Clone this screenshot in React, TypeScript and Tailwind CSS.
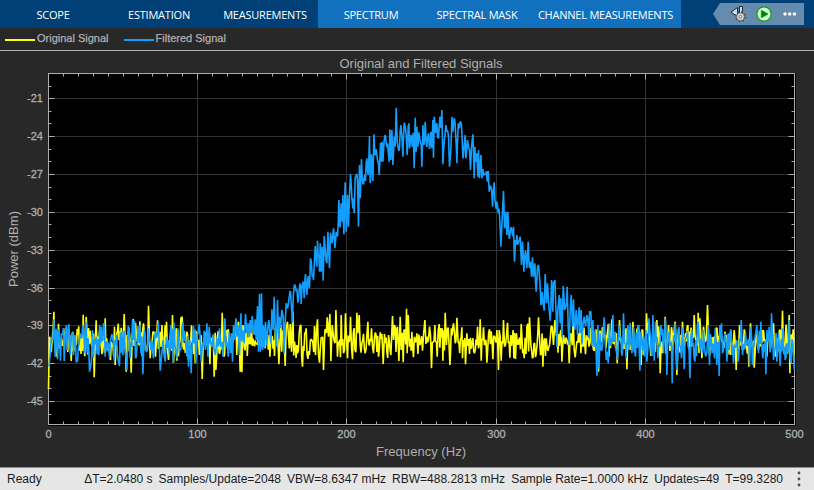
type Segment = { x: number; y: number; points: number[] };
type Point = [number, number];

// Traces are stored in pieces, in thirds of a pixel from the origin of each piece.
const ORIGINAL: Segment[] = [
  {
    x: 0,
    y: 290,
    points: [
      145, 297, 148, 140, 161, 65, 168, 200, 175, 101, 196, 114, 205, 118, 213, 213, 231, 117, 249, 74, 258, 80, 270, 122, 282, 262,
      288, 91, 298, 122, 315, 85, 331, 210, 343, 110, 345, 225, 352, 123, 363, 113, 372, 72, 378, 245, 385, 120, 393, 248, 399, 87,
      406, 98, 419, 94, 430, 100, 436, 180, 445, 47, 450, 205, 458, 126, 466, 200, 472, 91, 485, 105, 499, 95, 505, 210, 517, 75,
      520, 218, 528, 115, 530, 212, 542, 85, 546, 80, 560, 125, 565, 210, 574, 106, 585, 220,
    ],
  },
  {
    x: 200,
    y: 200,
    points: [
      0, 420, 6, 537, 12, 430, 29, 493, 42, 530, 45, 398, 47, 510, 66, 338, 71, 470, 102, 390, 107, 360, 115, 365, 120, 515, 125, 517,
      128, 375, 148, 380, 154, 378, 170, 430, 195, 445, 209, 470, 223, 468, 236, 493, 242, 375, 255, 498, 258, 385, 262, 365, 270, 372,
      274, 455, 278, 335, 290, 435, 292, 460, 302, 375, 307, 500, 318, 385, 328, 465, 343, 378, 346, 465, 352, 358, 358, 488,
      370, 510, 374, 390, 381, 352, 385, 410, 389, 342, 392, 483, 396, 375, 400, 410, 407, 330, 412, 470, 423, 345, 430, 460, 436, 340,
      442, 475, 451, 350, 457, 478, 464, 450, 470, 338, 473, 400, 477, 345, 480, 435, 495, 460, 503, 365, 514, 385, 520, 460, 525, 398,
      535, 470, 545, 402, 549, 492, 553, 402, 565, 405, 572, 465, 577, 348, 580, 420, 583, 375, 592, 380, 596, 483, 600, 350,
    ],
  },
  {
    x: 390,
    y: 220,
    points: [
      33, 390, 39, 427, 44, 330, 49, 266, 51, 400, 54, 285, 58, 380, 65, 335, 70, 412, 80, 340, 83, 402, 89, 375, 94, 348, 100, 345,
      104, 300, 110, 350, 118, 320, 124, 445, 134, 315, 141, 410, 147, 312, 156, 325, 158, 422, 165, 278, 169, 375, 179, 435, 190, 310,
      195, 370, 200, 293, 204, 370, 215, 322, 217, 415, 226, 433, 230, 340, 238, 402, 253, 400, 262, 320, 265, 385, 270, 298, 273, 422,
      280, 322, 290, 428, 298, 328, 308, 418, 320, 330, 325, 450, 327, 330, 333, 422, 340, 300, 346, 375, 352, 308, 371, 415,
      376, 417, 379, 340, 393, 312, 402, 415, 410, 320, 418, 292, 422, 375, 445, 292, 449, 375, 458, 440, 463, 355, 466, 408, 483, 318,
      486, 320, 490, 375, 494, 300, 515, 425, 520, 345, 537, 430, 543, 340, 549, 290, 555, 412, 570, 325, 572, 400, 586, 403, 599, 370,
    ],
  },
  {
    x: 590,
    y: 290,
    points: [
      2, 115, 10, 180, 25, 245, 61, 175, 65, 88, 81, 220, 88, 90, 97, 178, 110, 238, 128, 95, 145, 105, 153, 225, 169, 70, 175, 100,
      200, 90, 210, 250, 216, 190, 225, 80, 235, 105, 255, 95, 260, 255, 277, 95, 293, 105, 300, 180, 312, 75, 317, 150, 324, 68,
      329, 85, 335, 205, 340, 110, 348, 150, 352, 45, 356, 160, 378, 115, 404, 125, 420, 195, 432, 120, 438, 240, 448, 105, 462, 118,
      476, 230, 481, 100, 492, 233, 505, 180, 520, 120, 530, 200, 550, 100, 556, 200, 570, 120, 577, 62, 583, 180, 597, 75, 599, 250,
      606, 160, 612, 195,
    ],
  },
];

const FILTERED: Segment[] = [
  {
    x: 0,
    y: 290,
    points: [
      146, 230, 150, 195, 155, 150, 161, 88, 165, 200, 172, 208, 181, 212, 187, 135, 192, 213, 196, 125, 201, 180, 206, 103, 213, 140,
      220, 195, 228, 217, 232, 213, 240, 130, 250, 115, 254, 190, 257, 95, 261, 190, 268, 245, 272, 225, 277, 120, 280, 203, 288, 140,
      296, 195, 310, 100, 315, 200, 322, 155, 328, 205, 340, 160, 342, 212, 349, 135, 354, 210, 358, 228, 365, 125, 368, 195, 372, 122,
      380, 240, 384, 108, 390, 205, 397, 90, 403, 92, 406, 205, 413, 108, 416, 160, 419, 105, 422, 190, 428, 253, 433, 118, 440, 185,
      445, 115, 460, 205, 466, 125, 474, 95, 480, 242, 484, 200, 489, 150, 495, 215, 499, 140, 508, 195, 512, 105, 519, 218, 521, 97,
      527, 190, 533, 115, 542, 180, 548, 95, 555, 140, 565, 230, 569, 150, 573, 250, 580, 108, 587, 220, 591, 130, 597, 103,
    ],
  },
  {
    x: 200,
    y: 200,
    points: [
      0, 410, 3, 485, 7, 430, 12, 392, 16, 450, 20, 370, 23, 470, 27, 380, 31, 430, 35, 440, 39, 403, 42, 450, 46, 465, 50, 415, 54, 440,
      58, 385, 62, 440, 68, 470, 71, 420, 74, 355, 77, 440, 80, 425, 84, 470, 87, 395, 91, 460, 94, 400, 97, 485, 100, 375, 103, 420,
      107, 355, 110, 410, 113, 375, 116, 420, 118, 465, 122, 340, 125, 425, 128, 390, 132, 430, 136, 342, 140, 400, 144, 370, 148, 410,
      150, 360, 153, 400, 156, 348, 159, 385, 162, 405, 165, 358, 168, 420, 172, 318, 175, 455, 178, 282, 181, 455, 184, 280, 187, 450,
      190, 375, 193, 445, 196, 365, 200, 435, 203, 380, 206, 360, 209, 400, 212, 430, 215, 328, 219, 390, 222, 290, 225, 380, 228, 440,
      232, 300, 236, 415, 238, 350, 241, 385, 245, 330, 249, 350, 254, 382, 258, 310, 262, 325, 266, 298, 269, 275, 273, 310, 277, 368,
      279, 295, 281, 265, 286, 260, 290, 268, 293, 308, 297, 270, 301, 255, 303, 312, 308, 245, 312, 295, 316, 222, 320, 285, 324, 228,
      328, 265, 331, 175, 336, 230, 340, 240, 345, 138, 350, 200, 352, 122, 356, 170, 358, 215, 360, 130, 363, 215, 366, 140, 369, 242,
      372, 108, 376, 165, 380, 190, 383, 95, 388, 205, 391, 98, 396, 130, 400, 85, 404, 145, 408, 95, 412, 108, 416, 0, 419, 80,
    ],
  },
  {
    x: 340,
    y: 95,
    points: [
      0, 395, 3, 325, 6, 380, 8, 300, 11, 418, 15, 262, 18, 410, 22, 300, 25, 395, 28, 300, 31, 238, 35, 310, 38, 340, 40, 310, 42, 355,
      45, 250, 48, 240, 52, 255, 55, 395, 58, 210, 60, 310, 64, 193, 68, 265, 72, 250, 76, 258, 80, 190, 84, 240, 88, 123, 90, 265,
      94, 178, 98, 258, 101, 118, 104, 180, 108, 163, 112, 195, 117, 240, 121, 143, 124, 200, 126, 140, 128, 200, 132, 135, 134, 122,
      138, 145, 142, 145, 145, 180, 147, 200, 149, 103, 152, 195, 155, 105, 158, 210, 162, 125, 165, 155, 168, 38, 171, 140, 174, 160,
      178, 160, 182, 90, 185, 125, 188, 185, 192, 83, 195, 95, 198, 120, 201, 180, 204, 95, 206, 85, 208, 160, 212, 120, 216, 155,
      219, 113, 222, 220, 225, 68, 228, 170, 230, 95, 233, 155, 236, 112, 240, 140, 243, 150, 245, 215, 248, 90, 251, 150, 255, 80,
      258, 145, 262, 130, 265, 115, 268, 162, 272, 110, 275, 160, 278, 75, 280, 188, 282, 65, 286, 115, 290, 85, 295, 130, 299, 65,
      302, 100, 305, 45, 308, 208, 312, 140, 317, 90, 320, 110, 325, 125, 328, 215, 331, 180, 335, 65, 338, 110, 342, 70, 346, 110,
      350, 205, 354, 85, 357, 100, 360, 80, 364, 90, 368, 190, 372, 150, 375, 120, 377, 190, 382, 135, 385, 155, 388, 165, 391, 225,
      394, 155, 398, 118, 402, 250, 404, 155, 408, 200, 410, 175, 413, 245, 415, 165, 418, 250, 422, 180, 425, 250, 428, 222, 433, 240,
      437, 235, 441, 260, 444, 228, 447, 290, 452, 275, 457, 335, 459, 290, 462, 262, 466, 330, 470, 320, 474, 355, 478, 360, 482, 455,
      490, 288, 493, 400, 497, 350, 500, 420, 503, 350, 506, 420,
    ],
  },
  {
    x: 390,
    y: 220,
    points: [
      360, 35, 366, 40, 370, 20, 373, 125, 376, 60, 380, 45, 385, 65, 390, 50, 394, 135, 397, 65, 401, 155, 406, 92, 410, 145, 414, 65,
      417, 140, 421, 125, 424, 170, 427, 112, 430, 170, 434, 130, 438, 215, 442, 140, 445, 135, 448, 170, 452, 255, 456, 215, 462, 272,
      465, 162, 469, 250, 472, 190, 476, 260, 480, 302, 484, 180, 488, 275, 490, 185, 494, 180, 498, 285, 503, 265, 507, 225, 510, 310,
      512, 235, 515, 350, 519, 198, 523, 270, 527, 260, 531, 200, 534, 320, 537, 375, 540, 270, 543, 225, 547, 320, 550, 238, 554, 330,
      558, 270, 562, 345, 565, 285, 567, 262, 570, 340, 573, 270, 578, 315, 582, 290, 586, 320, 590, 285, 593, 300, 596, 353, 598, 275,
    ],
  },
  {
    x: 590,
    y: 290,
    points: [
      2, 65, 8, 90, 15, 120, 20, 258, 23, 105, 26, 238, 30, 130, 35, 180, 42, 82, 45, 150, 48, 210, 54, 220, 58, 100, 63, 145, 68, 75,
      75, 125, 82, 210, 86, 105, 92, 140, 100, 70, 108, 205, 113, 105, 116, 180, 120, 98, 125, 190, 130, 110, 136, 200, 144, 105,
      149, 242, 155, 155, 163, 200, 167, 120, 170, 215, 176, 85, 183, 190, 188, 75, 192, 212, 196, 95, 203, 205, 212, 105, 220, 190,
      226, 85, 230, 255, 237, 130, 246, 280, 255, 100, 260, 240, 266, 110, 274, 205, 282, 238, 290, 135, 299, 265, 305, 120, 314, 215,
      324, 95, 330, 180, 340, 120, 350, 185, 354, 105, 358, 225, 366, 190, 375, 115, 380, 225, 387, 258, 394, 100, 400, 180, 404, 130,
      410, 215, 414, 130, 422, 118, 430, 220, 440, 150, 444, 215, 453, 90, 457, 195, 466, 130, 478, 228, 482, 110, 487, 225, 500, 105,
      505, 190, 512, 95, 518, 205, 527, 253, 530, 120, 537, 110, 544, 70, 550, 210, 560, 215, 565, 130, 570, 228, 578, 115, 585, 210,
      592, 190, 597, 90, 603, 220, 608, 160, 612, 238,
    ],
  },
];

const STEP = 0.73;
const FLOOR_Y = 342;

function buildTrace(segments: Segment[], seed: number) {
  let state = seed;
  const random = () => {
    state = (state * 1664525 + 1013904223) % 4294967296;
    return state / 4294967296;
  };

  const anchors: Point[] = [];
  for (const s of segments) {
    for (let i = 0; i < s.points.length; i += 2) {
      anchors.push([s.x + s.points[i] / 3 + 0.2, s.y + s.points[i + 1] / 3]);
    }
  }

  const out: Point[] = [];
  anchors.forEach((p, i) => {
    out.push(p);
    const next = anchors[i + 1];
    if (!next) return;
    const gap = next[0] - p[0];
    if (p[1] < 302 || next[1] < 302) {
      if (gap > 1.2) {
        out.push([p[0] + gap / 2, (p[1] + next[1]) / 2 + (random() - 0.5) * 14]);
      }
      return;
    }
    // the sparse stretches of the noise floor get random samples
    const n = Math.floor(gap / STEP) - 1;
    for (let k = 1; k <= n; k++) {
      out.push([p[0] + (gap * k) / (n + 1), FLOOR_Y + (random() + random() - 1) * 19]);
    }
  });
  return out.map(([x, y]) => `${x.toFixed(1)},${y.toFixed(1)}`).join(" ");
}

const originalTrace = buildTrace(ORIGINAL, 7);
const filteredTrace = buildTrace(FILTERED, 49);

const LEFT = 48.5;
const RIGHT = 794.5;
const TOP = 73.5;
const BOTTOM = 424.5;
const hzToX = (hz: number) => Math.round((hz / 500) * 746 + 48) + 0.5;
const dbmToY = (dbm: number) => Math.round(98.2 + (-21 - dbm) * 12.62) + 0.5;

const xTicks = Array.from({ length: 51 }, (_, i) => i * 10);
const yTicks = Array.from({ length: 27 }, (_, i) => -20 - i);

const tabs = [
  { label: "SCOPE", className: "w-[106px]" },
  { label: "ESTIMATION", className: "w-[106px]" },
  { label: "MEASUREMENTS", className: "w-[106px]" },
  { label: "SPECTRUM", className: "w-[106px] bg-[#1171be]" },
  { label: "SPECTRAL MASK", className: "w-[106px] bg-[#1171be]" },
  { label: "CHANNEL MEASUREMENTS", className: "w-[151px] bg-[#1171be]" },
];

const status = [
  "ΔT=2.0480 s",
  "Samples/Update=2048",
  "VBW=8.6347 mHz",
  "RBW=488.2813 mHz",
  "Sample Rate=1.0000 kHz",
  "Updates=49",
  "T=99.3280",
];

export default function App() {
  return (
    <div className="flex h-[490px] w-[814px] flex-col overflow-hidden bg-[#282828] font-['Liberation_Sans',Arial,sans-serif]">
      <Toolstrip />
      <div className="flex h-[23px] shrink-0 items-start gap-[15px] border-b border-[#afafaf] pl-[5px] pt-[3px] text-[11px] leading-[15px] text-[#afafaf] [-webkit-text-stroke:0.25px_#afafaf]">
        <LegendItem label="Original Signal" color="bg-[#ffff11]" />
        <LegendItem label="Filtered Signal" color="bg-[#139fff]" />
      </div>
      <SpectrumPlot />
      <StatusBar />
    </div>
  );
}

function Toolstrip() {
  return (
    <header className="flex h-7 shrink-0 items-center bg-[#004076] pr-[10px]">
      {tabs.map((tab) => (
        <div
          key={tab.label}
          className={`flex h-full shrink-0 items-center justify-center whitespace-nowrap pt-[2px] font-['Open_Sans',sans-serif] text-[11px] tracking-[-0.22px] text-white ${tab.className}`}
        >
          {tab.label}
        </div>
      ))}
      <div className="ml-auto flex h-[22px] w-[91px] items-center bg-[#668cad] pl-[17px] [clip-path:polygon(0_50%,7px_0,100%_0,100%_100%,7px_100%)]">
        <SettingsIcon />
        <RunIcon />
        <svg width="14" height="4" viewBox="0 0 14 4" className="ml-[11px]" fill="#fff">
          <rect x="0.5" y="0.5" width="3" height="3" rx="0.8" />
          <rect x="5.2" y="0.5" width="3" height="3" rx="0.8" />
          <rect x="9.9" y="0.5" width="3" height="3" rx="0.8" />
        </svg>
      </div>
    </header>
  );
}

function SettingsIcon() {
  return (
    <svg width="16" height="16" viewBox="0 0 16 16" className="shrink-0">
      <path d="M7.5 1.5v9L1 6.2z" fill="#bfe4ff" stroke="#222" strokeLinejoin="round" />
      <path d="M9.5 .5h3v8h-3z" fill="#bfe4ff" stroke="#222" />
      <circle cx="10.5" cy="10.7" r="4.7" fill="none" stroke="#444" strokeWidth="1.6" strokeDasharray="1.8 1.89" />
      <circle cx="10.5" cy="10.7" r="3.9" fill="#d9d9d9" stroke="#555" strokeWidth="0.7" />
      <circle cx="10.5" cy="10.7" r="1.4" fill="#fff" stroke="#555" strokeWidth="0.8" />
    </svg>
  );
}

function RunIcon() {
  return (
    <svg width="16" height="16" viewBox="0 0 16 16" className="ml-[9.5px] shrink-0">
      <circle cx="8" cy="8" r="7.2" fill="#ccffc4" stroke="#0d9b1c" strokeWidth="1.3" />
      <path d="M5.3 4.2 12 8l-6.7 3.8z" fill="#067d14" stroke="#067d14" strokeWidth="0.6" strokeLinejoin="round" />
    </svg>
  );
}

function LegendItem({ label, color }: { label: string; color: string }) {
  return (
    <div className="flex items-start gap-[2px]">
      <div className={`mt-2 h-[1.5px] w-[30px] ${color}`} />
      <span>{label}</span>
    </div>
  );
}

function SpectrumPlot() {
  return (
    <svg
      width="814"
      height="416"
      viewBox="0 51 814 416"
      className="block shrink-0 font-['Liberation_Sans',Arial,sans-serif]"
    >
      <rect x="48" y="73" width="748" height="353" fill="#000" />
      <g stroke="#323232" strokeWidth="1">
        {[100, 200, 300, 400].map((hz) => (
          <line key={hz} x1={hzToX(hz)} x2={hzToX(hz)} y1={TOP} y2={BOTTOM} />
        ))}
        {yTicks.filter((dbm) => dbm % 3 === 0).map((dbm) => (
          <line key={dbm} x1={LEFT} x2={RIGHT} y1={dbmToY(dbm)} y2={dbmToY(dbm)} />
        ))}
      </g>

      <g stroke="#afafaf" strokeWidth="1" fill="none">
        <rect x={LEFT} y={TOP} width={RIGHT - LEFT} height={BOTTOM - TOP} />
        {xTicks.map((hz) => {
          const len = hz % 100 === 0 ? 6 : 3;
          return <path key={hz} d={`M${hzToX(hz)} ${TOP}v${len}M${hzToX(hz)} ${BOTTOM}v-${len}`} />;
        })}
        {yTicks.map((dbm) => {
          const len = dbm % 3 === 0 ? 6 : 3;
          return <path key={dbm} d={`M${LEFT} ${dbmToY(dbm)}h${len}M${RIGHT} ${dbmToY(dbm)}h-${len}`} />;
        })}
      </g>

      <g fill="none" strokeWidth="1.6" strokeLinejoin="bevel">
        <polyline points={originalTrace} stroke="#ffff11" />
        <polyline points={filteredTrace} stroke="#139fff" />
      </g>

      <g fill="#afafaf" stroke="#afafaf" strokeWidth="0.3" fontSize="11">
        {yTicks.filter((dbm) => dbm % 3 === 0).map((dbm) => (
          <text key={dbm} x="43" y={dbmToY(dbm) + 3.5} textAnchor="end">
            {dbm}
          </text>
        ))}
        {xTicks.filter((hz) => hz % 100 === 0).map((hz) => (
          <text key={hz} x={hzToX(hz)} y="438" textAnchor="middle">
            {hz}
          </text>
        ))}
      </g>
      <g fill="#afafaf" fontSize="13">
        <text x="339.5" y="68" textLength="163" lengthAdjust="spacing">
          Original and Filtered Signals
        </text>
        <text x="376" y="456" textLength="90" lengthAdjust="spacing">
          Frequency (Hz)
        </text>
        <text transform="translate(18 287) rotate(-90)" textLength="76" lengthAdjust="spacing">
          Power (dBm)
        </text>
      </g>
    </svg>
  );
}

function StatusBar() {
  return (
    <footer className="flex h-[23px] shrink-0 items-center border-t border-[#8c8c8c] bg-[#e6e6e6] pl-[7px] pr-[13px] text-[12px] text-[#1a1a1a]">
      <span>Ready</span>
      <div className="ml-auto flex gap-[6px] whitespace-nowrap">
        {status.map((item) => (
          <span key={item}>{item}</span>
        ))}
      </div>
      <svg width="4" height="16" viewBox="0 0 4 16" className="ml-[14px]" fill="#505050">
        <circle cx="2" cy="2" r="1.4" />
        <circle cx="2" cy="8" r="1.4" />
        <circle cx="2" cy="14" r="1.4" />
      </svg>
    </footer>
  );
}
